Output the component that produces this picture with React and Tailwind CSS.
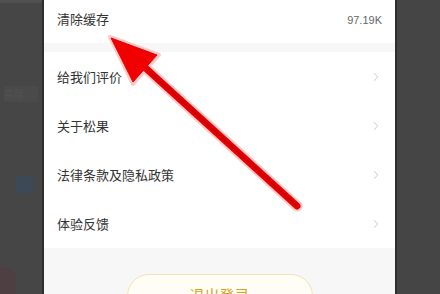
import { ChevronRight } from 'lucide-react'

const rows = ['给我们评价', '关于松果', '法律条款及隐私政策', '体验反馈']

const font = { fontFamily: '"Noto Sans CJK SC", "Noto Sans", sans-serif' }

const Row = ({ label }) => (
    <div className="flex h-[49px] shrink-0 items-center justify-between pl-[13px] pr-[12px]">
        <span className="text-[13px] text-[#333]">{label}</span>
        <ChevronRight className="h-[14px] w-[14px] text-[#c4c4c4]" strokeWidth={1.6} />
    </div>
)

const Arrow = () => (
    <svg className="pointer-events-none absolute inset-0" width="440" height="294" viewBox="0 0 440 294">
        <line x1="140" y1="63" x2="297" y2="206" stroke="#ffc9c9" strokeWidth="11" strokeLinecap="round" />
        <polygon points="110,37 159,55 133,84" fill="#ffc9c9" stroke="#ffc9c9" strokeWidth="4" strokeLinejoin="round" />
        <line x1="140" y1="63" x2="297" y2="206" stroke="#e80000" strokeWidth="7" strokeLinecap="round" />
        <line x1="150" y1="72" x2="296" y2="205" stroke="#c80000" strokeWidth="2" strokeLinecap="round" />
        <polygon points="111,38 157,55 133,82" fill="#f00000" stroke="#e80000" strokeWidth="1" strokeLinejoin="round" />
    </svg>
)

export default function App() {
    return (
        <div className="relative flex h-[294px] w-[440px] overflow-hidden bg-[#454545]" style={font}>
            {/* dimmed page behind the sheet */}
            <div className="relative w-[42px] shrink-0 bg-[#464646]">
                <div className="h-[3px] bg-[#505050]" />
                <div className="absolute left-[4px] top-[86px] h-[16px] w-[34px] bg-[#4a4a4a] text-[10px] leading-[16px] text-[#525252]">
                    实际
                </div>
                <div className="absolute left-[16px] top-[176px] h-[17px] w-[17px] bg-[#3e4957]" />
                <div className="absolute left-0 top-[268px] h-[26px] w-[16px] rounded-tr-[10px] bg-[#4e3f42]" />
            </div>
            <div className="w-[2px] shrink-0 bg-[#2e2e2e]" />

            {/* settings sheet */}
            <div className="flex w-[351px] shrink-0 flex-col bg-[#f7f7f7]">
                <div className="flex h-[43px] shrink-0 items-center justify-between bg-white pb-[6px] pl-[13px] pr-[13px]">
                    <span className="text-[13px] text-[#333]">清除缓存</span>
                    <span className="pt-[3px] text-[11px] text-[#666]" style={{ fontFamily: '"Liberation Sans", sans-serif' }}>
                        97.19K
                    </span>
                </div>
                <div className="h-[9px] shrink-0 bg-[#f7f7f7]" />
                <div className="flex shrink-0 flex-col bg-white">
                    {rows.map((r) => (
                        <Row key={r} label={r} />
                    ))}
                </div>
                <div className="flex shrink-0 justify-center pt-[26px]">
                    <div className="flex h-[44px] w-[186px] shrink-0 justify-center rounded-[22px] border border-[#f3e3b3] bg-[#fffdf6] pt-[9px]">
                        <span className="text-[15px] text-[#d9a520]">退出登录</span>
                    </div>
                </div>
            </div>

            <div className="w-[2px] shrink-0 bg-[#2e2e2e]" />
            <div className="flex-1 bg-[#454545]" />

            <Arrow />
        </div>
    )
}
